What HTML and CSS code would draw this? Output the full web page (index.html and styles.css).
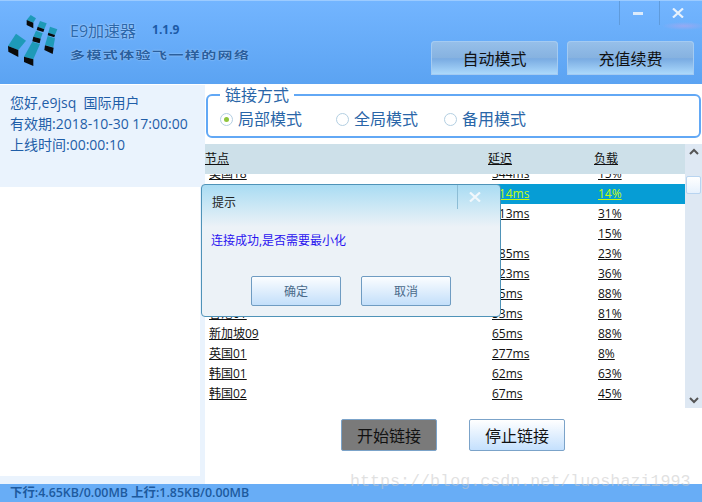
FILE: index.html
```html
<!DOCTYPE html>
<html lang="en">
<head>
    <meta charset="UTF-8">
    <meta name="viewport" content="width=device-width, initial-scale=1.0">
    <title>E9加速器</title>
    <link rel="stylesheet" href="styles.css">
</head>
<body>
    <div class="app">
        <div class="header">
            <svg class="logo" width="80" height="80" viewBox="0 0 240 240">
                <polygon points="92,45 108,55 100,68 80,60" fill="#1e9ab8"/>
                <polygon points="80,60 100,68 100,85 80,75" fill="#0a0a0a"/>
                <polygon points="120,63 140,70 133,88 113,80" fill="#1e9ab8"/>
                <polygon points="113,80 133,88 130,96 110,90" fill="#0a0a0a"/>
                <polygon points="108,92 128,100 122,116 100,110" fill="#1e9ab8"/>
                <polygon points="100,110 122,116 119,130 97,124" fill="#0a0a0a"/>
                <polygon points="97,125 120,132 100,178 72,170" fill="#1e9ab8"/>
                <polygon points="72,170 100,178 100,198 72,186" fill="#0a0a0a"/>
                <polygon points="150,80 172,88 165,105 145,98" fill="#1e9ab8"/>
                <polygon points="145,98 165,105 163,112 143,106" fill="#0a0a0a"/>
                <polygon points="143,108 165,115 160,142 135,135" fill="#1e9ab8"/>
                <polygon points="135,136 161,143 158,162 133,150" fill="#0a0a0a"/>
                <polygon points="48,101 78,122 55,150 24,138" fill="#1e9ab8"/>
                <polygon points="24,138 55,150 55,171 25,155" fill="#0a0a0a"/>
            </svg>
            <div class="brand">
                <div class="brand-top">
                    <span class="brand-name">E9加速器</span>
                    <span class="brand-version">1.1.9</span>
                </div>
                <div class="brand-slogan">多模式体验飞一样的网络</div>
            </div>
            <div class="header-right">
                <div class="win-controls">
                    <div class="win-btn"><span class="win-min"></span></div>
                    <div class="win-btn">
                        <svg class="win-x" width="12" height="10" viewBox="0 0 12 10"><path d="M1 0.5 L11 9.5 M11 0.5 L1 9.5" stroke="#e8f2fc" stroke-width="2.2"/></svg>
                    </div>
                </div>
                <div class="mode-buttons">
                    <button class="mode-btn">自动模式</button>
                    <button class="mode-btn">充值续费</button>
                </div>
            </div>
        </div>

        <div class="main">
            <div class="sidebar">
                <div class="user-info">
                    <div>您好,e9jsq&nbsp;&nbsp;国际用户</div>
                    <div>有效期:2018-10-30 17:00:00</div>
                    <div>上线时间:00:00:10</div>
                </div>
                <div class="side-blank"></div>
            </div>

            <div class="content">
                <fieldset class="connect-box">
                    <legend>链接方式</legend>
                    <div class="radio-row">
                        <span class="radio-item first"><span class="radio checked"></span>局部模式</span>
                        <span class="radio-item"><span class="radio"></span>全局模式</span>
                        <span class="radio-item"><span class="radio"></span>备用模式</span>
                    </div>
                </fieldset>

                <div class="table-wrap">
                    <div class="table">
                        <div class="row table-head">
                            <span>节点</span><span>延迟</span><span>负载</span>
                        </div>
                        <div class="rows">
                            <div class="row"><span>美国18</span><span>344ms</span><span>15%</span></div>
                            <div class="row selected"><span></span><span>114ms</span><span>14%</span></div>
                            <div class="row"><span></span><span>113ms</span><span>31%</span></div>
                            <div class="row"><span></span><span></span><span>15%</span></div>
                            <div class="row"><span></span><span>185ms</span><span>23%</span></div>
                            <div class="row"><span></span><span>123ms</span><span>36%</span></div>
                            <div class="row"><span></span><span>75ms</span><span>88%</span></div>
                            <div class="row"><span>香港01</span><span>53ms</span><span>81%</span></div>
                            <div class="row"><span>新加坡09</span><span>65ms</span><span>88%</span></div>
                            <div class="row"><span>英国01</span><span>277ms</span><span>8%</span></div>
                            <div class="row"><span>韩国01</span><span>62ms</span><span>63%</span></div>
                            <div class="row"><span>韩国02</span><span>67ms</span><span>45%</span></div>
                        </div>
                    </div>
                    <div class="scrollbar">
                        <svg width="12" height="8" viewBox="0 0 12 8"><path d="M2 6 L6 2 L10 6" fill="none" stroke="#555" stroke-width="2"/></svg>
                        <div class="scroll-thumb"></div>
                        <svg class="scroll-down" width="12" height="8" viewBox="0 0 12 8"><path d="M2 2 L6 6 L10 2" fill="none" stroke="#555" stroke-width="2"/></svg>
                    </div>
                </div>

                <div class="action-row">
                    <button class="action-btn active">开始链接</button>
                    <button class="action-btn">停止链接</button>
                </div>
            </div>
        </div>

        <div class="statusbar">下行:4.65KB/0.00MB 上行:1.85KB/0.00MB</div>

        <div class="watermark">https://blog.csdn.net/luoshazi1993</div>

        <div class="dialog">
            <div class="dialog-title">
                <span>提示</span>
                <span class="dialog-close">
                    <svg width="12" height="10" viewBox="0 0 12 10"><path d="M1 0.5 L11 9.5 M11 0.5 L1 9.5" stroke="#f2f8fc" stroke-width="2.2"/></svg>
                </span>
            </div>
            <div class="dialog-msg">连接成功,是否需要最小化</div>
            <div class="dialog-buttons">
                <button class="dialog-btn">确定</button>
                <button class="dialog-btn">取消</button>
            </div>
        </div>
    </div>
</body>
</html>
```
FILE: styles.css
```css
body {
    margin: 0;
    font-family: "Open Sans", "Noto Sans CJK SC", sans-serif;
    background: #fff;
}
button {
    font-family: inherit;
    cursor: pointer;
    padding: 0;
}
.app {
    position: relative;
    width: 702px;
    height: 502px;
    overflow: hidden;
    display: flex;
    flex-direction: column;
}

/* header */
.header {
    height: 84px;
    box-sizing: border-box;
    border-top: 1px solid #9ccbff;
    background: radial-gradient(ellipse 22px 4px at 684px 25px, rgba(185, 165, 235, 0.55), transparent), linear-gradient(#73b5ff, #5ba3f2);
    display: flex;
    flex-shrink: 0;
}
.logo {
    margin: -1px -10px 0 0;
    flex-shrink: 0;
}
.brand {
    margin-top: 20px;
}
.brand-top {
    display: flex;
    align-items: center;
}
.brand-name {
    font-size: 16px;
    line-height: 20px;
    color: #2c68ab;
    text-shadow: 0 0 2px #cfe6ff;
}
.brand-version {
    font-size: 12px;
    font-weight: bold;
    color: #1c5aa6;
    margin: -4px 0 0 16px;
}
.brand-slogan {
    margin-top: 5px;
    font-size: 15px;
    line-height: 18px;
    font-weight: bold;
    letter-spacing: 1.4px;
    color: #2a5f9e;
    text-shadow: 0 0 2px #b9dbff;
    white-space: nowrap;
    transform: scaleY(0.72);
    transform-origin: left center;
}
.header-right {
    margin-left: auto;
    display: flex;
    flex-direction: column;
    align-items: flex-end;
}
.win-controls {
    display: flex;
    height: 24px;
    margin-right: 3px;
}
.win-btn {
    width: 40px;
    border-left: 1px solid #5f9bdc;
    box-sizing: border-box;
    display: flex;
    align-items: center;
    justify-content: center;
}
.win-min {
    width: 10px;
    height: 3px;
    margin-right: 4px;
    background: #dcebfb;
}
.win-x {
    margin-right: 3px;
}
.mode-buttons {
    display: flex;
    gap: 9px;
    margin: 16px 8px 0 0;
}
.mode-btn {
    width: 127px;
    height: 34px;
    border: 0;
    border-radius: 4px 4px 0 0;
    background: linear-gradient(#97c0ea 0, #86b2e0 50%, #79abe2 52%, #afdcfd 100%);
    box-shadow: inset 0 0 0 1px #a4cbf2;
    font-size: 16px;
    color: #111;
}

/* main area */
.main {
    flex: 1;
    display: flex;
    min-height: 0;
    margin-top: 1px;
}
.sidebar {
    width: 205px;
    flex-shrink: 0;
    background: #eaf3fd;
    display: flex;
    flex-direction: column;
    padding-bottom: 8px;
    box-sizing: border-box;
}
.user-info {
    height: 102px;
    padding: 7px 0 0 10px;
    box-sizing: border-box;
    font-size: 14px;
    line-height: 21px;
    color: #1f5ea8;
}
.side-blank {
    flex: 1;
    width: 200px;
    background: #fff;
}
.content {
    flex: 1;
    min-width: 0;
}
.connect-box {
    margin: 0 0 0 1px;
    height: 53px;
    box-sizing: border-box;
    width: 495px;
    padding: 0 0 0 12px;
    border: 2px solid #62a8f5;
    border-radius: 6px;
}
.connect-box legend {
    padding: 0 5px;
    font-size: 16px;
    line-height: 20px;
    color: #2a66a8;
}
.radio-row {
    display: flex;
    gap: 26px;
    margin-top: 2px;
}
.radio-item {
    display: flex;
    align-items: center;
    font-size: 16px;
    line-height: 24px;
    color: #2a66a8;
}
.radio-item.first {
    margin-right: 8px;
}
.radio {
    width: 11px;
    height: 11px;
    border: 1px solid #b3cfe2;
    border-radius: 50%;
    margin-right: 5px;
    display: flex;
    align-items: center;
    justify-content: center;
    background: #fff;
}
.radio.checked::after {
    content: "";
    width: 5px;
    height: 5px;
    border-radius: 50%;
    background: #8fc53c;
}

/* table */
.table-wrap {
    display: flex;
    margin-top: 6px;
    height: 264px;
}
.table {
    width: 480px;
    font-size: 12px;
    overflow: hidden;
}
.row {
    display: grid;
    grid-template-columns: 283px 106px 1fr;
    height: 20px;
    line-height: 20px;
    padding-left: 4px;
    color: #111;
}
.row span {
    text-decoration: underline;
    white-space: nowrap;
}
.table-head {
    position: relative;
    z-index: 1;
    height: 30px;
    line-height: 30px;
    padding-left: 0;
    background: #cde0e9;
}
.rows {
    margin-top: -10px;
}
.row.selected {
    background: #069dd5;
    color: #c4fb12;
}
.scrollbar {
    width: 17px;
    background: #dee8f3;
    display: flex;
    flex-direction: column;
    align-items: center;
    padding-top: 4px;
    box-sizing: border-box;
}
.scroll-thumb {
    width: 15px;
    height: 18px;
    margin-top: 20px;
    background: linear-gradient(#fff, #e6f1fd);
    border: 1px solid #b8d4f0;
    box-sizing: border-box;
    border-radius: 2px;
}
.scroll-down {
    margin-top: auto;
    margin-bottom: 4px;
}
.action-row {
    display: flex;
    gap: 32px;
    margin: 11px 0 0 136px;
}
.action-btn {
    width: 96px;
    height: 32px;
    border: 1px solid #7ba3c9;
    border-radius: 2px;
    background: linear-gradient(#fff, #c4e0fd);
    font-size: 16px;
    color: #111;
}
.action-btn.active {
    background: #7a7a7a;
}

/* status bar */
.statusbar {
    height: 18px;
    flex-shrink: 0;
    background: #68adf6;
    padding-left: 10px;
    font-size: 12.4px;
    line-height: 18px;
    font-weight: 600;
    color: #1d5a9e;
}
.watermark {
    position: absolute;
    left: 350px;
    top: 472px;
    font-family: "Liberation Mono", monospace;
    font-size: 16.7px;
    line-height: 20px;
    color: rgba(200, 200, 200, 0.55);
    white-space: nowrap;
}

/* dialog */
.dialog {
    position: absolute;
    left: 201px;
    top: 184px;
    width: 300px;
    height: 133px;
    box-sizing: border-box;
    border: 1px solid #4f93b8;
    border-radius: 4px;
    background: linear-gradient(#a9dcf3 0, #ecf2f7 42px);
}
.dialog-title {
    display: flex;
    justify-content: space-between;
    height: 36px;
    padding-left: 10px;
    font-size: 12px;
    line-height: 36px;
    color: #222;
}
.dialog-close {
    width: 43px;
    height: 24px;
    padding-right: 8px;
    box-sizing: border-box;
    border-left: 1px solid #8dbdd6;
    display: flex;
    align-items: center;
    justify-content: center;
}
.dialog-msg {
    margin-top: 10px;
    padding-left: 9px;
    font-size: 12px;
    line-height: 20px;
    color: #2a14f0;
}
.dialog-buttons {
    display: flex;
    gap: 20px;
    margin: 25px 0 0 49px;
}
.dialog-btn {
    width: 90px;
    height: 30px;
    border: 1px solid #6f9cc2;
    border-radius: 2px;
    background: linear-gradient(#fbfdff, #c3dffa);
    font-size: 12px;
    color: #4a6a8a;
}
```
